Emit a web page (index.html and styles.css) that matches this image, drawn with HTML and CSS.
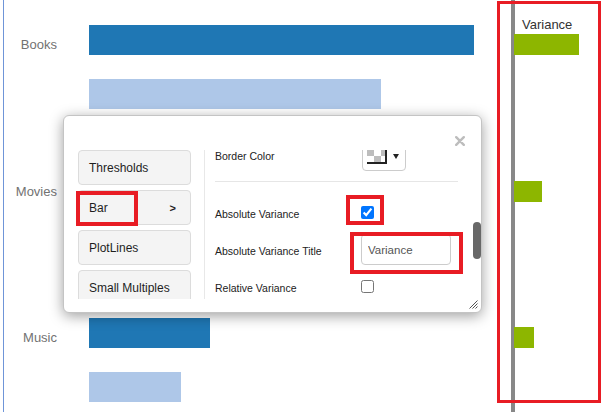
FILE: index.html
```html
<!DOCTYPE html>
<html>
<head>
<meta charset="utf-8">
<link rel="stylesheet" href="styles.css">
</head>
<body>
<div class="chart">
  <div class="plot">
    <div class="cat">
      <span class="lbl">Books</span>
      <div class="bar dark" style="width:385px"></div>
      <div class="bar light" style="width:292px"></div>
    </div>
    <div class="cat">
      <span class="lbl">Movies</span>
      <div class="bar dark" style="width:330px"></div>
      <div class="bar light" style="width:250px"></div>
    </div>
    <div class="cat">
      <span class="lbl">Music</span>
      <div class="bar dark" style="width:121px"></div>
      <div class="bar light" style="width:92px"></div>
    </div>
  </div>
  <div class="var">
    <div class="axis">
      <div class="vh">Variance</div>
      <div class="vbars">
        <div class="vbar" style="width:65px"></div>
        <div class="vbar" style="width:28px"></div>
        <div class="vbar" style="width:20px"></div>
      </div>
    </div>
  </div>
</div>
<div class="mark mark-var"></div>

<div class="dialog">
  <svg class="close" width="10" height="10" viewBox="0 0 10 10"><path d="M1.2 1.2L8.8 8.8M8.8 1.2L1.2 8.8" stroke="#bdbdbd" stroke-width="2.4" stroke-linecap="round"/></svg>
  <div class="dlg-body">
    <nav class="tabs">
      <div class="tab">Thresholds</div>
      <div class="tab">Bar <span class="chev">&gt;</span><span class="mark hl-tab"></span></div>
      <div class="tab">PlotLines</div>
      <div class="tab">Small Multiples</div>
    </nav>
    <div class="panel">
      <div class="row first">
        <span class="lab">Border Color</span>
        <div class="ctl">
          <div class="swatch-btn">
            <span class="swatch"></span>
            <svg width="6" height="5" viewBox="0 0 6 5"><path d="M0 0H6L3 5Z" fill="#222"/></svg>
          </div>
        </div>
      </div>
      <hr class="sep">
      <div class="row">
        <span class="lab">Absolute Variance</span>
        <div class="ctl"><input type="checkbox" checked><span class="mark hl-cb"></span></div>
      </div>
      <div class="row">
        <span class="lab">Absolute Variance Title</span>
        <div class="ctl"><input class="txt" type="text" value="Variance"><span class="mark hl-in"></span></div>
      </div>
      <div class="row">
        <span class="lab">Relative Variance</span>
        <div class="ctl"><input type="checkbox"></div>
      </div>
    </div>
  </div>
  <div class="thumb"></div>
  <svg class="grip" width="9" height="9" viewBox="0 0 9 9"><path d="M8.5 0.5L0.5 8.5M8.5 3.5L3.5 8.5M8.5 6.5L6.5 8.5" stroke="#555" stroke-width="1"/></svg>
</div>
</body>
</html>
```
FILE: styles.css
```css
body {
  margin: 0;
  position: relative;
  width: 615px;
  height: 412px;
  overflow: hidden;
  background: #fff;
  font-family: "Liberation Sans", Arial, sans-serif;
}

.chart {
  display: flex;
  height: 412px;
  margin-left: 3px;
  border-left: 1px solid #6f95d8;
}

.plot {
  width: 493px;
  flex: none;
  box-sizing: border-box;
  padding-top: 25px;
  display: flex;
  flex-direction: column;
  gap: 62.5px;
}

.cat {
  display: grid;
  grid-template-columns: 53px 408px;
  grid-template-rows: 30px 30px;
  column-gap: 32px;
  row-gap: 24px;
}

.lbl {
  grid-row: 1;
  grid-column: 1;
  align-self: end;
  margin-bottom: 3px;
  text-align: right;
  font-size: 13px;
  line-height: 15px;
  color: #727272;
}

.bar { grid-column: 2; height: 30px; }
.dark { grid-row: 1; background: #1f77b4; }
.light { grid-row: 2; background: #aec7e8; }

.var {
  width: 118px;
  flex: none;
  box-sizing: border-box;
  padding-left: 14px;
}

.axis {
  height: 100%;
  box-sizing: border-box;
  border-left: 4px solid #888;
  padding-top: 17px;
  display: flex;
  flex-direction: column;
}

.vh {
  padding-left: 7px;
  font-size: 13px;
  line-height: 15px;
  color: #333;
}

.vbars {
  margin-top: 2px;
  display: flex;
  flex-direction: column;
  gap: 125.5px;
}

.vbar {
  height: 21px;
  margin-left: -1px;
  background: #8db600;
}

.mark {
  position: absolute;
  box-sizing: border-box;
  border: 4px solid #e81c24;
  pointer-events: none;
}

.mark-var {
  left: 497px;
  top: 1px;
  width: 104px;
  height: 402px;
  border-width: 3px;
}

.dialog {
  position: absolute;
  left: 63px;
  top: 115px;
  width: 419px;
  height: 198px;
  box-sizing: border-box;
  background: #fff;
  border: 1px solid #c4c4c4;
  border-radius: 6px;
  box-shadow: 0 3px 14px rgba(0, 0, 0, 0.38);
  padding: 34px 0 13px 14px;
}

.close {
  position: absolute;
  right: 16px;
  top: 20px;
}

.dlg-body {
  display: flex;
  height: 149px;
}

.tabs {
  width: 113px;
  flex: none;
  margin-right: 13px;
  display: flex;
  flex-direction: column;
  gap: 5px;
  clip-path: inset(0 -10px);
}

.tab {
  position: relative;
  flex: none;
  height: 35px;
  box-sizing: border-box;
  border: 1px solid #dcdcdc;
  border-radius: 4px;
  background: #f4f4f4;
  display: flex;
  align-items: center;
  justify-content: space-between;
  padding: 0 14px 0 10px;
  font-size: 12px;
  color: #1e1e1e;
}

.chev { font-weight: bold; font-size: 11px; }

.hl-tab {
  left: -3px;
  top: 0;
  width: 62px;
  height: 35px;
}

.panel {
  flex: 1;
  border-left: 1px solid #e8e8e8;
  padding: 0 23px 0 10px;
  overflow: hidden;
}

.row {
  display: grid;
  grid-template-columns: 146px 1fr;
  height: 37px;
  align-items: center;
  font-size: 10.5px;
  color: #222;
}

.row .lab { padding-top: 2px; }

.row.first {
  height: 38px;
  margin-top: -13px;
}

.row.first .lab { padding-top: 0; }

.sep {
  border: 0;
  border-top: 1px solid #e6e6e6;
  margin: 6px 0 12px;
}

.ctl {
  position: relative;
  height: 100%;
  display: flex;
  align-items: center;
}

.ctl input[type="checkbox"] {
  margin: 0;
  width: 13px;
  height: 13px;
}

.txt {
  width: 90px;
  height: 31px;
  box-sizing: border-box;
  border: 1px solid #ccc;
  border-radius: 4px;
  padding: 0 6px;
  font: 11.5px "Liberation Sans", Arial, sans-serif;
  color: #555;
  outline: none;
}

.hl-cb {
  left: -15px;
  top: 1px;
  width: 38px;
  height: 30px;
}

.hl-in {
  left: -11px;
  top: 1px;
  width: 113px;
  height: 42px;
}

.swatch-btn {
  margin-left: 1px;
  width: 44px;
  height: 30px;
  box-sizing: border-box;
  border: 1px solid #ccc;
  border-radius: 4px;
  display: flex;
  align-items: center;
  gap: 6px;
  padding-left: 4px;
}

.swatch {
  width: 20px;
  height: 18px;
  margin-top: -2px;
  box-sizing: border-box;
  border-right: 2px solid #222;
  border-bottom: 2px solid #222;
  background-color: #fff;
  background-image: conic-gradient(#bdbdbd 25%, #fff 0 50%, #bdbdbd 0 75%, #fff 0);
  background-size: 14px 14px;
  background-position: 7px 3px;
}

.thumb {
  position: absolute;
  left: 409px;
  top: 106px;
  width: 8px;
  height: 37px;
  border-radius: 4px;
  background: #686868;
}

.grip {
  position: absolute;
  right: 3px;
  bottom: 3px;
}
```
